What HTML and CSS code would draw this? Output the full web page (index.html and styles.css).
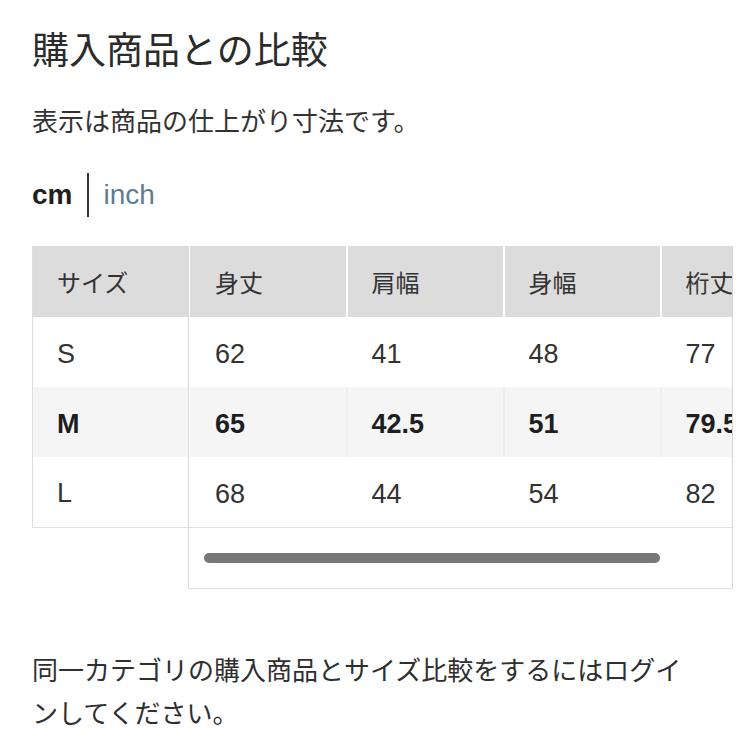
FILE: index.html
```html
<!DOCTYPE html>
<html lang="ja">
<head>
<meta charset="utf-8">
<title>購入商品との比較</title>
<link rel="stylesheet" href="styles.css">
</head>
<body>
<main class="page">
  <h1 class="title">購入商品との比較</h1>
  <p class="note">表示は商品の仕上がり寸法です。</p>
  <div class="units">
    <span class="unit unit-active">cm</span>
    <span class="unit-sep"></span>
    <span class="unit unit-link">inch</span>
  </div>

  <div class="size-table">
    <table class="fixed-col">
      <thead>
        <tr><th>サイズ</th></tr>
      </thead>
      <tbody>
        <tr><td>S</td></tr>
        <tr class="current"><td>M</td></tr>
        <tr><td>L</td></tr>
      </tbody>
    </table>
    <div class="scroller">
      <div class="track">
        <table class="data">
          <thead>
            <tr><th>身丈</th><th>肩幅</th><th>身幅</th><th>桁丈</th></tr>
          </thead>
          <tbody>
            <tr><td>62</td><td>41</td><td>48</td><td>77</td></tr>
            <tr class="current"><td>65</td><td>42.5</td><td>51</td><td>79.5</td></tr>
            <tr><td>68</td><td>44</td><td>54</td><td>82</td></tr>
          </tbody>
        </table>
      </div>
      <div class="bar"><div class="thumb"></div></div>
    </div>
  </div>

  <p class="login">同一カテゴリの購入商品とサイズ比較をするにはログインしてください。</p>
</main>
</body>
</html>
```

FILE: styles.css
```css
html, body {
  margin: 0;
  padding: 0;
  background: #ffffff;
}

body {
  font-family: "Liberation Sans", "Noto Sans CJK JP", sans-serif;
  color: #333333;
  width: 736px;
  height: 736px;
  overflow: hidden;
}

.page {
  padding: 22px 0 0 32px;
}

.title {
  margin: 0;
  font-family: "Noto Sans CJK JP", sans-serif;
  font-size: 37px;
  font-weight: 400;
  line-height: 52px;
  color: #2b2b2b;
}

.note {
  margin: 28px 0 0;
  font-family: "Noto Sans CJK JP", sans-serif;
  font-size: 26px;
  line-height: 36px;
  color: #333333;
}

.units {
  margin-top: 35px;
  display: flex;
  align-items: center;
  height: 44px;
}

.unit {
  font-size: 28px;
  line-height: 44px;
}

.unit-active {
  font-weight: 700;
  color: #1f1f1f;
}

.unit-sep {
  width: 2px;
  height: 44px;
  background: #333333;
  margin: 0 14px 0 15px;
}

.unit-link {
  color: #5e7c91;
}

.size-table {
  margin-top: 29px;
  display: flex;
  align-items: flex-start;
}

table {
  border-collapse: collapse;
  border-spacing: 0;
  table-layout: fixed;
}

th, td {
  box-sizing: border-box;
  padding: 0 0 0 24px;
  text-align: left;
  white-space: nowrap;
  overflow: hidden;
}

th {
  height: 71px;
  background: #dcdcdc;
  font-family: "Noto Sans CJK JP", sans-serif;
  font-size: 24px;
  font-weight: 400;
  color: #333333;
  vertical-align: middle;
}

td {
  height: 70px;
  font-size: 27px;
  color: #333333;
  vertical-align: middle;
  padding-top: 4px;
}

tr.current td {
  background: #f5f5f5;
  font-weight: 700;
  color: #1e1e1e;
}

.fixed-col {
  width: 156px;
  flex: none;
  border-left: 1px solid #dedede;
  border-bottom: 1px solid #e2e2e2;
}

.fixed-col th,
.fixed-col td {
  width: 155px;
}

.scroller {
  flex: 1;
  margin-right: 3px;
  border-left: 1px solid #dcdcdc;
  border-right: 1px solid #d6d6d6;
  border-bottom: 1px solid #dcdcdc;
  overflow: hidden;
}

.track {
  overflow: hidden;
  border-bottom: 1px solid #e2e2e2;
}

.data {
  width: 628px;
}

.data th,
.data td {
  width: 157px;
  border-left: 2px solid #ffffff;
  padding-left: 24px;
}

.data th:first-child,
.data td:first-child {
  border-left-width: 1px;
  padding-left: 25px;
}

.data tr.current td {
  border-left-color: #efefef;
}

.data tr.current td:first-child {
  border-left-color: #ffffff;
}

.bar {
  height: 60px;
  padding: 25px 0 0 15px;
  box-sizing: border-box;
}

.thumb {
  width: 456px;
  height: 10px;
  border-radius: 5px;
  background: #787878;
}

.login {
  margin: 58px 0 0;
  width: 668px;
  font-family: "Noto Sans CJK JP", sans-serif;
  font-size: 26px;
  line-height: 43px;
  color: #2f2f2f;
}
```
